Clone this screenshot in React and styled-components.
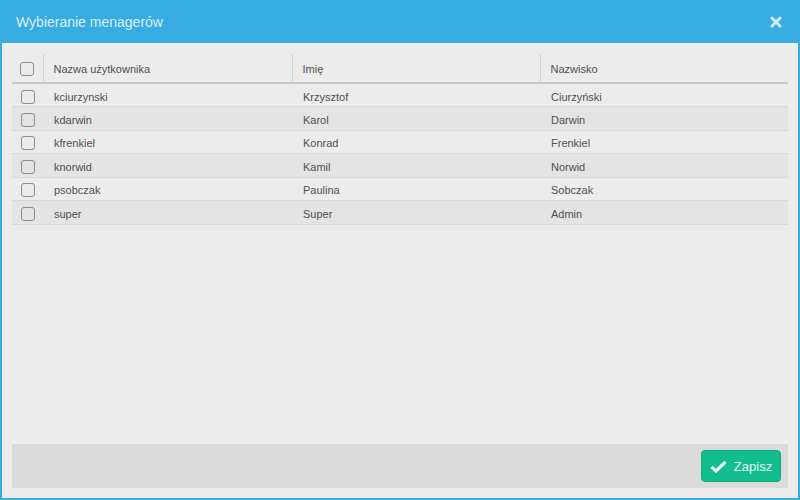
import React, { useState } from "react";
import styled, { createGlobalStyle } from "styled-components";

const GlobalStyle = createGlobalStyle`
  html, body {
    margin: 0;
    padding: 0;
  }
  body {
    font-family: "Liberation Sans", Arial, sans-serif;
  }
`;

const users = [
  { login: "kciurzynski", first: "Krzysztof", last: "Ciurzyński" },
  { login: "kdarwin", first: "Karol", last: "Darwin" },
  { login: "kfrenkiel", first: "Konrad", last: "Frenkiel" },
  { login: "knorwid", first: "Kamil", last: "Norwid" },
  { login: "psobczak", first: "Paulina", last: "Sobczak" },
  { login: "super", first: "Super", last: "Admin" },
];

function App() {
  const [checked, setChecked] = useState({});

  const toggle = (login) => {
    setChecked({ ...checked, [login]: !checked[login] });
  };

  return (
    <Dialog>
      <GlobalStyle />
      <Header>
        <Title>Wybieranie menagerów</Title>
        <CloseButton aria-label="close">
          <svg width="12" height="12" viewBox="0 0 12 12">
            <path
              d="M2 2 L10 10 M10 2 L2 10"
              stroke="currentColor"
              strokeWidth="3"
              strokeLinecap="round"
            />
          </svg>
        </CloseButton>
      </Header>
      <Body>
        <TableWrap>
          <Table>
            <thead>
              <tr>
                <HeadCell $check>
                  <Box />
                </HeadCell>
                <HeadCell>Nazwa użytkownika</HeadCell>
                <HeadCell>Imię</HeadCell>
                <HeadCell>Nazwisko</HeadCell>
              </tr>
            </thead>
            <tbody>
              {users.map((u, i) => (
                <Row key={u.login} $odd={i % 2 === 1}>
                  <Cell $check>
                    <Box
                      $on={checked[u.login]}
                      onClick={() => toggle(u.login)}
                    />
                  </Cell>
                  <Cell>{u.login}</Cell>
                  <Cell>{u.first}</Cell>
                  <Cell>{u.last}</Cell>
                </Row>
              ))}
            </tbody>
          </Table>
        </TableWrap>
        <Footer>
          <SaveButton>
            <svg width="17" height="13" viewBox="0 0 17 13">
              <path
                d="M1.5 6.8 L6 11 L15.5 1.8"
                fill="none"
                stroke="currentColor"
                strokeWidth="3.2"
                strokeLinejoin="miter"
              />
            </svg>
            Zapisz
          </SaveButton>
        </Footer>
      </Body>
    </Dialog>
  );
}

export default App;

const Dialog = styled.div`
  width: 800px;
  height: 500px;
  background: #36ace2;
  display: flex;
  flex-direction: column;
  box-sizing: border-box;
`;

const Header = styled.div`
  height: 43px;
  flex: none;
  display: flex;
  align-items: center;
  justify-content: space-between;
  padding: 0 18px 0 16px;
`;

const Title = styled.div`
  color: #dceff9;
  font-size: 14px;
`;

const CloseButton = styled.span`
  color: #d4e9f4;
  display: flex;
  margin-top: 1px;
`;

const Body = styled.div`
  flex: 1;
  margin: 0 2px 2px 2px;
  background: #ececec;
  padding: 10px 10px 10px 10px;
  display: flex;
  flex-direction: column;
`;

const TableWrap = styled.div`
  flex: 1;
  padding-top: 1px;
`;

const Table = styled.table`
  width: 100%;
  border-collapse: collapse;
  table-layout: fixed;
  font-size: 11px;
  color: #505050;

  th:nth-child(1) {
    width: 31px;
  }
  th:nth-child(2) {
    width: 249px;
  }
  th:nth-child(3) {
    width: 248px;
  }
`;

const HeadCell = styled.th`
  height: 29px;
  padding: ${(p) => (p.$check ? "1px 0 0 0" : "2px 10px 0 10px")};
  text-align: ${(p) => (p.$check ? "center" : "left")};
  font-weight: normal;
  border-bottom: 2px solid #c8c8c8;
  border-left: ${(p) => (p.$check ? "none" : "1px solid #d4d4d4")};
  box-sizing: border-box;
  vertical-align: middle;
  line-height: 14px;
`;

const Row = styled.tr`
  background: ${(p) => (p.$odd ? "#e4e4e4" : "transparent")};
  border-bottom: 1px solid #d9d9d9;
`;

const Cell = styled.td`
  height: 23.5px;
  box-sizing: border-box;
  padding: ${(p) => (p.$check ? "2px 0 0 0" : "3px 10px 0 11px")};
  text-align: ${(p) => (p.$check ? "center" : "left")};
  vertical-align: middle;
  line-height: 14px;
  white-space: nowrap;
  overflow: hidden;
`;

const Box = styled.span`
  display: inline-block;
  width: 12px;
  height: 12px;
  border: 1px solid #8c8c8c;
  border-radius: 3px;
  background: ${(p) => (p.$on ? "#36ace2" : "transparent")};
  vertical-align: middle;
  cursor: pointer;
`;

const Footer = styled.div`
  height: 44px;
  flex: none;
  background: #dbdbdb;
  display: flex;
  align-items: center;
  justify-content: flex-end;
  padding-right: 7px;
`;

const SaveButton = styled.button`
  width: 80px;
  height: 32px;
  background: #12be8d;
  border: 1px solid #0faa7e;
  border-radius: 4px;
  color: #e8f8f2;
  font-family: "Liberation Sans", Arial, sans-serif;
  font-size: 13px;
  display: flex;
  align-items: center;
  justify-content: center;
  gap: 7px;
  padding: 0;
  box-sizing: border-box;
  cursor: pointer;
`;
